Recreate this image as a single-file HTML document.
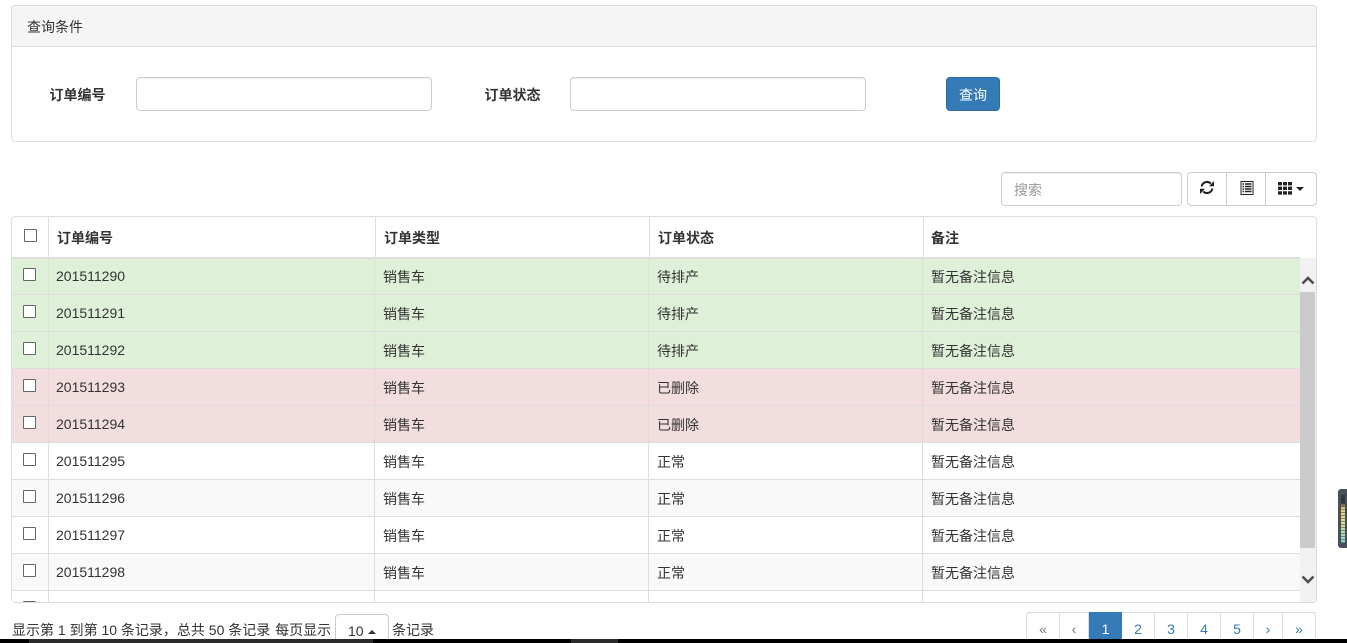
<!DOCTYPE html>
<html lang="zh">
<head>
<meta charset="utf-8">
<title>订单查询</title>
<style>
*{box-sizing:border-box}
html,body{margin:0;padding:0;width:1347px;height:643px;overflow:hidden;background:#fff}
body{position:relative;font:14px/20px "Liberation Sans","Noto Sans CJK SC",sans-serif;color:#333}
.a{position:absolute}
.t{position:absolute;white-space:nowrap;height:20px;line-height:20px}
.b{font-weight:bold}
.input{position:absolute;background:#fff;border:1px solid #ccc;border-radius:4px;box-shadow:inset 0 1px 1px rgba(0,0,0,.075)}
.row{position:absolute;left:12px;width:1288px;height:37px;border-top:1px solid #ddd}
.g{background:#dff0d8}.r{background:#f2dede}.s{background:#f9f9f9}
.row i{position:absolute;top:0;bottom:0;width:1px;background:#ddd}
.g i{background:#d6e6d0}.r i{background:#e6d5d5}
.row .c{position:absolute;left:11px;top:10px;width:13px;height:13px;border:1px solid #666;background:#fff;border-radius:1px}
.row span{position:absolute;white-space:nowrap;height:20px;line-height:20px}
.row .n{left:44px;top:8px}
.row .k{left:371px;top:9px}
.row .z{left:645px;top:9px}
.row .m{left:919px;top:9px}
.pg{position:absolute;top:612px;height:32px;text-align:center;line-height:32px;color:#337ab7;font-size:14px;border-right:1px solid #ddd;border-top:1px solid #ddd}
.pg.d{color:#777}
</style>
</head>
<body>

<!-- Query panel -->
<div class="a" style="left:11px;top:5px;width:1306px;height:137px;border:1px solid #ddd;border-radius:4px;overflow:hidden">
  <div class="a" style="left:0;top:0;width:1304px;height:41px;background:#f5f5f5;border-bottom:1px solid #ddd"></div>
</div>
<div class="t" style="left:27px;top:17px">查询条件</div>
<div class="t b" style="left:50px;top:85px;margin-left:-.5px">订单编号</div>
<div class="input" style="left:136px;top:77px;width:296px;height:34px"></div>
<div class="t b" style="left:485px;top:85px;margin-left:-.5px">订单状态</div>
<div class="input" style="left:570px;top:77px;width:296px;height:34px"></div>
<div class="a" style="left:946px;top:77px;width:54px;height:34px;background:#337ab7;border:1px solid #2e6da4;border-radius:4px;color:#fff;text-align:center;line-height:34px">查询</div>

<!-- Toolbar -->
<div class="input" style="left:1001px;top:172px;width:181px;height:34px"></div>
<div class="t" style="left:1014px;top:180px;color:#999">搜索</div>
<div class="a" style="left:1187px;top:172px;width:130px;height:34px;border:1px solid #ccc;border-radius:4px;background:#fff"></div>
<div class="a" style="left:1226px;top:172px;width:1px;height:34px;background:#ccc"></div>
<div class="a" style="left:1265px;top:172px;width:1px;height:34px;background:#ccc"></div>
<svg class="a" style="left:1200px;top:180px" width="14" height="15" viewBox="0 0 14 14">
  <path d="M1.6 6A5.5 5.5 0 0 1 10.8 3" fill="none" stroke="#222" stroke-width="2"/>
  <path d="M9 5.7H14V.5z" fill="#222"/>
  <path d="M12.4 8A5.5 5.5 0 0 1 3.2 11" fill="none" stroke="#222" stroke-width="2"/>
  <path d="M5 8.3H0V13.5z" fill="#222"/>
</svg>
<svg class="a" style="left:1240px;top:181px" width="14" height="14" viewBox="0 0 14 14">
  <path d="M1 .5H13V13.5H1z" fill="#fff" stroke="#222"/>
  <path d="M2.5 3H4M5 3H11.5M2.5 5.5H4M5 5.5H11.5M2.5 8H4M5 8H11.5M2.5 10.5H4M5 10.5H11.5" stroke="#222" stroke-width="1.4"/>
</svg>
<svg class="a" style="left:1278px;top:182px" width="14" height="13" viewBox="0 0 14 13" fill="#222">
  <path d="M0 0h4v3.4H0zM5 0h4v3.4H5zM10 0h4v3.4h-4zM0 4.6h4V8H0zM5 4.6h4V8H5zM10 4.6h4V8h-4zM0 9.2h4v3.4H0zM5 9.2h4v3.4H5zM10 9.2h4v3.4h-4z"/>
</svg>
<svg class="a" style="left:1296px;top:187px" width="8" height="4" viewBox="0 0 8 4"><path d="M0 0h8L4 4z" fill="#222"/></svg>

<!-- Table container -->
<div class="a" style="left:11px;top:216px;width:1306px;height:387px;border:1px solid #ddd;border-radius:4px;background:#fff"></div>
<div class="a" style="left:48px;top:217px;width:1px;height:40px;background:#ddd"></div>
<div class="a" style="left:375px;top:217px;width:1px;height:40px;background:#ddd"></div>
<div class="a" style="left:649px;top:217px;width:1px;height:40px;background:#ddd"></div>
<div class="a" style="left:923px;top:217px;width:1px;height:40px;background:#ddd"></div>
<div class="a" style="left:24px;top:229px;width:13px;height:13px;border:1px solid #666;border-radius:1px"></div>
<div class="t b" style="left:57px;top:228px">订单编号</div>
<div class="t b" style="left:384px;top:228px">订单类型</div>
<div class="t b" style="left:658px;top:228px">订单状态</div>
<div class="t b" style="left:931px;top:228px">备注</div>

<div class="row g" style="top:257px;border-top:2px solid #ddd;height:37px"><i style="left:36px"></i><i style="left:362px"></i><i style="left:636px"></i><i style="left:910px"></i><b class="c" style="top:9px"></b><span class="n" style="top:7px">201511290</span><span class="k" style="top:8px">销售车</span><span class="z" style="top:8px">待排产</span><span class="m" style="top:8px">暂无备注信息</span></div>
<div class="row g" style="top:294px"><i style="left:36px"></i><i style="left:362px"></i><i style="left:636px"></i><i style="left:910px"></i><b class="c"></b><span class="n">201511291</span><span class="k">销售车</span><span class="z">待排产</span><span class="m">暂无备注信息</span></div>
<div class="row g" style="top:331px"><i style="left:36px"></i><i style="left:362px"></i><i style="left:636px"></i><i style="left:910px"></i><b class="c"></b><span class="n">201511292</span><span class="k">销售车</span><span class="z">待排产</span><span class="m">暂无备注信息</span></div>
<div class="row r" style="top:368px"><i style="left:36px"></i><i style="left:362px"></i><i style="left:636px"></i><i style="left:910px"></i><b class="c"></b><span class="n">201511293</span><span class="k">销售车</span><span class="z">已删除</span><span class="m">暂无备注信息</span></div>
<div class="row r" style="top:405px"><i style="left:36px"></i><i style="left:362px"></i><i style="left:636px"></i><i style="left:910px"></i><b class="c"></b><span class="n">201511294</span><span class="k">销售车</span><span class="z">已删除</span><span class="m">暂无备注信息</span></div>
<div class="row" style="top:442px;background:#fff"><i style="left:36px"></i><i style="left:362px"></i><i style="left:636px"></i><i style="left:910px"></i><b class="c"></b><span class="n">201511295</span><span class="k">销售车</span><span class="z">正常</span><span class="m">暂无备注信息</span></div>
<div class="row s" style="top:479px"><i style="left:36px"></i><i style="left:362px"></i><i style="left:636px"></i><i style="left:910px"></i><b class="c"></b><span class="n">201511296</span><span class="k">销售车</span><span class="z">正常</span><span class="m">暂无备注信息</span></div>
<div class="row" style="top:516px;background:#fff"><i style="left:36px"></i><i style="left:362px"></i><i style="left:636px"></i><i style="left:910px"></i><b class="c"></b><span class="n">201511297</span><span class="k">销售车</span><span class="z">正常</span><span class="m">暂无备注信息</span></div>
<div class="row s" style="top:553px"><i style="left:36px"></i><i style="left:362px"></i><i style="left:636px"></i><i style="left:910px"></i><b class="c"></b><span class="n">201511298</span><span class="k">销售车</span><span class="z">正常</span><span class="m">暂无备注信息</span></div>
<div class="row" style="top:590px;height:12px;background:#fff;overflow:hidden"><i style="left:36px"></i><i style="left:362px"></i><i style="left:636px"></i><i style="left:910px"></i><b class="c"></b></div>

<!-- Scrollbar -->
<div class="a" style="left:1300px;top:258px;width:16px;height:344px;background:#f1f1f1"></div>
<div class="a" style="left:1300px;top:292px;width:15px;height:256px;background:#cbcbcb"></div>
<svg class="a" style="left:1301px;top:275px" width="14" height="10" viewBox="0 0 14 10"><path d="M1.5 8.5L7 3L12.5 8.5" fill="none" stroke="#505050" stroke-width="2.6"/></svg>
<svg class="a" style="left:1301px;top:575px" width="14" height="10" viewBox="0 0 14 10"><path d="M1.5 1.5L7 7L12.5 1.5" fill="none" stroke="#505050" stroke-width="2.6"/></svg>

<!-- Footer -->
<div class="t" style="left:12px;top:620px">显示第 1 到第 10 条记录<span style="font-family:'Noto Sans CJK TC',sans-serif">，</span>总共 50 条记录 <span style="margin-left:1px">每页显示</span></div>
<div class="a" style="left:335px;top:614px;width:54px;height:32px;border:1px solid #ccc;border-radius:4px 4px 0 0;background:#fff"></div>
<div class="t" style="left:348px;top:621px">10</div>
<svg class="a" style="left:368px;top:630px" width="8" height="4" viewBox="0 0 8 4"><path d="M4 0L8 4H0z" fill="#333"/></svg>
<div class="t" style="left:392px;top:620px">条记录</div>

<!-- Pagination -->
<div class="a" style="left:1026px;top:612px;width:290px;height:32px;border:1px solid #ddd;border-radius:4px 4px 0 0;background:#fff"></div>
<div class="pg d" style="left:1027px;width:33px">«</div>
<div class="pg d" style="left:1060px;width:29px">‹</div>
<div class="a" style="left:1089px;top:612px;width:33px;height:32px;background:#337ab7;color:#fff;text-align:center;line-height:34px">1</div>
<div class="pg" style="left:1122px;width:33px">2</div>
<div class="pg" style="left:1155px;width:33px">3</div>
<div class="pg" style="left:1188px;width:33px">4</div>
<div class="pg" style="left:1221px;width:33px">5</div>
<div class="pg" style="left:1254px;width:29px">›</div>
<div class="pg" style="left:1283px;width:32px;border-right:0">»</div>

<!-- Desktop widget at right edge -->
<div class="a" style="left:1338px;top:489px;width:9px;height:59px;background:#4a4f5c;border-radius:3px 0 0 3px"></div>
<div class="a" style="left:1341px;top:495px;width:4px;height:48px;background:repeating-linear-gradient(rgba(60,65,75,0) 0,rgba(60,65,75,0) 2px,rgba(60,65,75,.55) 2px,rgba(60,65,75,.55) 3px),linear-gradient(#30333c 0,#30333c 16%,#f0d070 28%,#dce080 60%,#78e0c8 100%)"></div>

<!-- Bottom black bar -->
<div class="a" style="left:0;top:639px;width:1347px;height:4px;background:#000"></div>
<div class="a" style="left:29px;top:639px;width:344px;height:4px;background:#2b2b2b"></div>
<div class="a" style="left:571px;top:639px;width:47px;height:4px;background:#2b2b2b"></div>

</body>
</html>
